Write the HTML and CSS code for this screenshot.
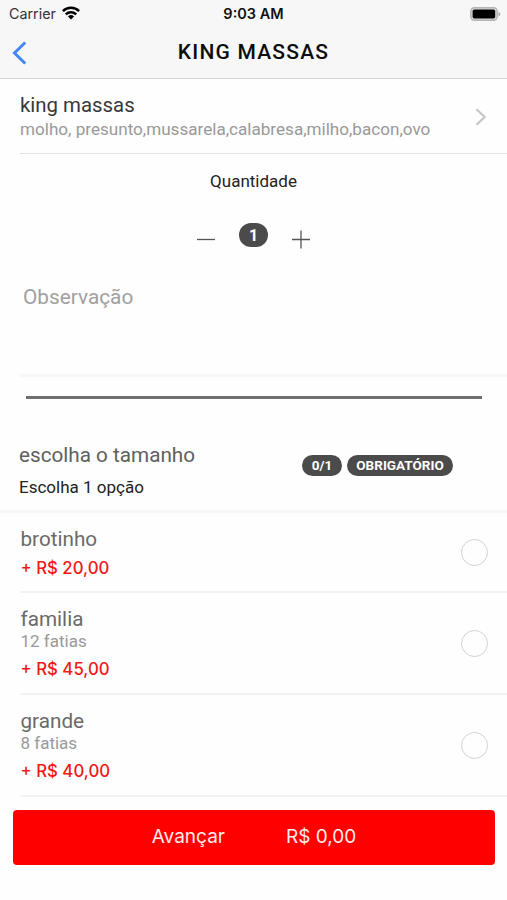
FILE: index.html
```html
<!DOCTYPE html>
<html lang="pt-BR">
<head>
<meta charset="utf-8">
<title>King Massas</title>
<link rel="stylesheet" href="styles.css">
</head>
<body>
<header class="header">
  <div class="status">
    <div class="carrier"><span class="carrier-name">Carrier</span>
      <svg width="18" height="14" viewBox="0 0 18 14" fill="none" stroke="#000" stroke-width="2.5"><path d="M.9 5.1a11.6 11.6 0 0 1 16.2 0M3.8 8.3a7.4 7.4 0 0 1 10.4 0"/><path d="M9 13.5 5.9 10.5a4.5 4.5 0 0 1 6.2 0z" fill="#000" stroke="none"/></svg>
    </div>
    <span class="clock">9:03 AM</span>
    <svg class="battery" width="31" height="14" viewBox="0 0 31 14"><rect x=".8" y=".8" width="26.4" height="12.4" rx="3.6" fill="#d8d8d8" stroke="#b4b4b4" stroke-width="1.5"/><rect x="2.6" y="2.4" width="22.6" height="9.2" rx="1.8"/><path d="M28.5 4.7c2.4.8 2.4 3.8 0 4.6z" fill="#aaa"/></svg>
  </div>
  <div class="nav">
    <svg class="back" width="15" height="24" viewBox="0 0 15 24" fill="none" stroke="#4287f5" stroke-width="3"><path d="M13.2 1.5 2.5 12l10.7 10.5"/></svg>
    <h1 class="title">KING MASSAS</h1>
  </div>
</header>
<main>
  <section class="product">
    <div>
      <h2 class="product-name">king massas</h2>
      <p class="product-desc">molho, presunto,mussarela,calabresa,milho,bacon,ovo</p>
    </div>
    <svg width="12" height="18" viewBox="0 0 12 18" fill="none" stroke="#c4c4c6" stroke-width="2.1"><path d="m1.5 1.2 8.2 7.8-8.2 7.8"/></svg>
  </section>
  <section class="quantity">
    <p class="quantity-label">Quantidade</p>
    <div class="stepper">
      <svg width="18" height="20" viewBox="0 0 18 20" stroke="#555" stroke-width="1.3"><path d="M0 10.5h18"/></svg>
      <span class="count">1</span>
      <svg width="18" height="20" viewBox="0 0 18 20" stroke="#555" stroke-width="1.3"><path d="M0 10.5h18M9 1.5v18"/></svg>
    </div>
  </section>
  <section class="note">Observação</section>
  <hr class="rule">
  <section class="group">
    <div>
      <h3 class="group-title">escolha o tamanho</h3>
      <p class="group-hint">Escolha 1 opção</p>
    </div>
    <div class="tags"><span class="tag tag-count">0/1</span><span class="tag tag-required">OBRIGATÓRIO</span></div>
  </section>
  <ul class="options">
    <li class="option option-short">
      <div><p class="name">brotinho</p><p class="price">+ R$ 20,00</p></div>
      <span class="radio"></span>
    </li>
    <li class="option">
      <div><p class="name">familia</p><p class="slices">12 fatias</p><p class="price">+ R$ 45,00</p></div>
      <span class="radio"></span>
    </li>
    <li class="option">
      <div><p class="name">grande</p><p class="slices">8 fatias</p><p class="price">+ R$ 40,00</p></div>
      <span class="radio"></span>
    </li>
  </ul>
</main>
<button class="next"><span class="next-label">Avançar</span><span class="next-total">R$ 0,00</span></button>
</body>
</html>
```
FILE: styles.css
```css
* { box-sizing: border-box; }
body { margin: 0; background: #fefefe; font-family: Roboto, sans-serif; color: #222; }
h1, h2, h3, p, ul { margin: 0; padding: 0; font-weight: 400; white-space: nowrap; }
svg { display: block; flex: none; }
.header { height: 79px; background: #f7f7f7; border-bottom: 1px solid #d4d4d4; }
.status { display: grid; grid-template-columns: 1fr auto 1fr; height: 27px; align-items: center; padding: 0 6px 0 9px; }
.carrier { display: flex; gap: 6px; align-items: center; font: 14.3px/20px Inter, sans-serif; color: #333; }
.carrier svg { margin-bottom: 2px; }
.clock { margin-right: 3px; font: 600 14.5px/20px Inter, sans-serif; color: #111; }
.battery { justify-self: end; }
.nav { display: grid; grid-template-columns: 27px 1fr 27px; height: 51px; align-items: center; }
.back { margin-left: 12px; }
.title { margin-top: -2px; text-align: center; font-size: 21px; font-weight: 500; line-height: 28px; letter-spacing: 1.2px; color: #0c0c0c; }

.product { display: flex; justify-content: space-between; height: 75px; margin-left: 20px; padding: 12px 20px 0 0; border-bottom: 1px solid #e2e2e2; }
.product svg { margin-top: 17px; }
.product-name { font-size: 20.4px; line-height: 28px; color: #383838; }
.product-desc { font-size: 17.1px; line-height: 20px; color: #999; }

.quantity { height: 120px; padding-top: 17px; text-align: center; }
.quantity-label { font-size: 17px; line-height: 20px; }
.stepper { display: flex; justify-content: center; gap: 24px; margin-top: 32px; }
.stepper svg { margin-top: 6px; }
.count { width: 29px; height: 24px; border-radius: 12px; background: #4b4b4b; color: #fff; font: 700 16px/25px Roboto, sans-serif; }

.note { height: 103px; margin-left: 20px; padding: 9px 0 0 3px; border-bottom: 3px solid #f7f7f7; font-size: 20.8px; line-height: 28px; color: #a0a0a0; }
.rule { height: 3px; margin: 19px 25px 0 26px; border: 0; background: #707070; }
.group { display: flex; justify-content: space-between; height: 114px; padding: 42px 54px 0 19px; border-bottom: 3px solid #f7f7f7; }
.group-title { font-size: 20.7px; line-height: 28px; color: #606060; }
.group-hint { margin-top: 6px; font-size: 17px; line-height: 24px; }
.tags { display: flex; gap: 5px; margin-top: 14px; }
.tag { height: 21px; border-radius: 11px; background: #4b4b4b; color: #fff; text-align: center; font-size: 13.5px; font-weight: 700; line-height: 21px; }
.tag-count { width: 40px; }
.tag-required { width: 106px; }

.options { list-style: none; margin-left: 20px; }
.option { display: flex; justify-content: space-between; align-items: center; height: 102px; padding: 0 19px 0 .5px; border-bottom: 2px solid #f2f2f2; }
.option-short { height: 80px; }
.name { font-size: 20.7px; line-height: 26px; color: #6a6a6a; }
.slices { margin-top: -1px; font-size: 17px; line-height: 20px; color: #999; }
.price { margin-top: 7px; font: 500 16.8px/22px Inter, sans-serif; color: #f01818; }
.option-short .price { margin-top: 5px; }
.radio { width: 27px; height: 27px; margin-top: 1px; border: 1.5px solid #d2d2d2; border-radius: 50%; }

.next { display: flex; justify-content: center; align-items: center; gap: 61px; width: 482px; height: 55px; margin: 13px 0 0 13px; padding: 0 0 2px; border: 0; border-radius: 4px; background: #f00; color: #ffecec; font: 19px/26px Inter, sans-serif; }
```
